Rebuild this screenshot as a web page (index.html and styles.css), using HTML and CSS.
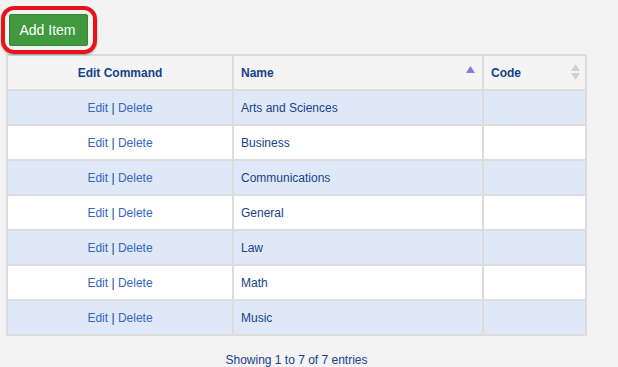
FILE: index.html
```html
<!DOCTYPE html>
<html lang=en>
<head>
  <meta charset=utf-8>
  <title>Items</title>
  <meta name=viewport content='width=device-width, initial-scale=1.0'>
  <link rel="stylesheet" href="styles.css">
</head>
<body>
  <div class=toolbar>
    <span class=ring><button class=add type=button>Add Item</button></span>
  </div>

  <table class=grid>
    <thead>
      <tr>
        <th class=cmd>Edit Command</th>
        <th class=name><span class=hd>Name <svg class=sort width=9 height=7 viewBox="0 0 9 7"><path d="M4.5 0 L9 7 L0 7 Z" fill="#7f7fe0"/></svg></span></th>
        <th class=code><span class=hd>Code <svg class=sort width=9 height=17 viewBox="0 0 9 17"><path d="M4.5 0 L9 7 L0 7 Z M0 9 L9 9 L4.5 16 Z" fill="#d2d2d2"/></svg></span></th>
      </tr>
    </thead>
    <tbody>
      <tr><td class=cmd><a>Edit</a> | <a>Delete</a></td><td>Arts and Sciences</td><td></td></tr>
      <tr><td class=cmd><a>Edit</a> | <a>Delete</a></td><td>Business</td><td></td></tr>
      <tr><td class=cmd><a>Edit</a> | <a>Delete</a></td><td>Communications</td><td></td></tr>
      <tr><td class=cmd><a>Edit</a> | <a>Delete</a></td><td>General</td><td></td></tr>
      <tr><td class=cmd><a>Edit</a> | <a>Delete</a></td><td>Law</td><td></td></tr>
      <tr><td class=cmd><a>Edit</a> | <a>Delete</a></td><td>Math</td><td></td></tr>
      <tr><td class=cmd><a>Edit</a> | <a>Delete</a></td><td>Music</td><td></td></tr>
    </tbody>
  </table>

  <p class=info>Showing 1 to 7 of 7 entries</p>
</body>
</html>
```

FILE: styles.css
```css
/* page */

body {
  margin: 0;
  background: #f3f3f3;
  font-family: "Liberation Sans", Arial, sans-serif;
  font-size: 12px;
  color: #15428b;
}

/* add button with its red marker ring */

.toolbar {
  height: 54px;
  padding-left: 1px;
}

.ring {
  display: inline-block;
  margin-top: 6px;
  padding: 4px 5px 4px 4px;
  border: 4px solid #e8121b;
  border-radius: 13px;
  box-shadow: 0 1px 2px rgba(0, 0, 0, 0.35);
}

.add {
  display: block;
  width: 79px;
  height: 32px;
  padding: 0 2px 0 0;
  border: 1px solid #358535;
  border-radius: 2px;
  background: #41993f;
  color: #fff;
  font-family: inherit;
  font-size: 14px;
}

/* grid */

.grid {
  margin-left: 6px;
  width: 581px;
  border-collapse: collapse;
  border: 2px solid #dcdcdc;
}

.grid th,
.grid td {
  border: 2px solid #dcdcdc;
  height: 33px;
  padding: 0 7px;
  text-align: left;
}

.grid th {
  height: 33px;
  background: #f4f4f4;
  font-weight: bold;
}

.grid .cmd {
  width: 210px;
  text-align: center;
}

.grid .name {
  width: 234px;
}

.grid .code {
  padding-right: 5px;
}

.hd {
  display: flex;
  align-items: center;
  justify-content: space-between;
}

.name .sort {
  margin-top: -6px;
}

.grid tbody tr:nth-child(odd) td {
  background: #dfe8f6;
}

.grid tbody tr:nth-child(even) td {
  background: #fff;
}

.grid a {
  color: #3466c2;
}

.info {
  margin: 17px 0 0;
  width: 593px;
  text-align: center;
}
```
